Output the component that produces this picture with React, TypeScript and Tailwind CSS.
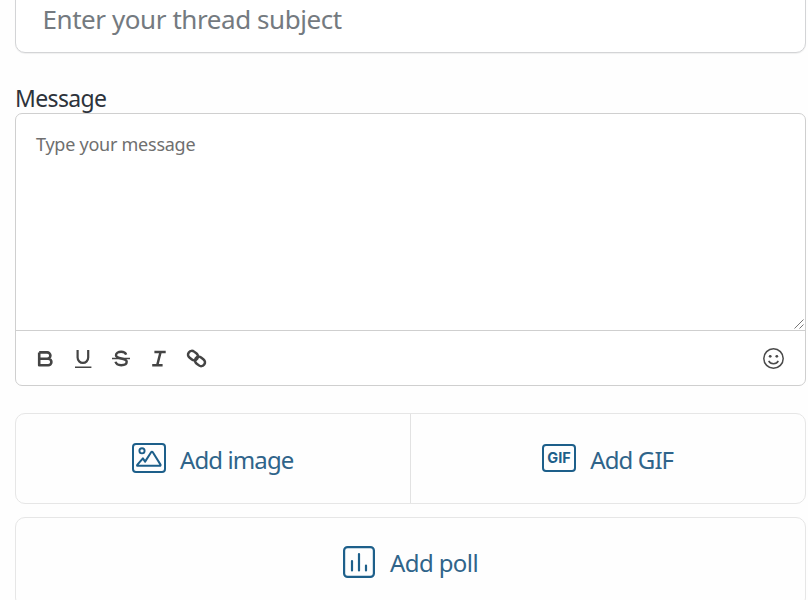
import React from "react";

const tools = [
  {
    label: "Bold",
    icon: (
      <path
        d="M3.2 2.4v12.8h9a3.2 3.2 0 0 0 0-6.4h-9M3.2 2.4h8a3.2 3.2 0 0 1 0 6.4"
        strokeWidth="2.6"
        strokeLinejoin="round"
      />
    ),
  },
  {
    label: "Underline",
    icon: (
      <>
        <path d="M3.6 0v7.6a5.3 5.3 0 0 0 10.6 0V0" strokeWidth="2.2" />
        <path d="M1 17.3h16.4" strokeWidth="1.4" />
      </>
    ),
  },
  {
    label: "Strikethrough",
    icon: (
      <>
        <path
          d="M14.2 4.6C13.4 2.6 11.6 1.8 9.2 1.8c-3 0-5.2 1.4-5.2 3.5 0 4.4 10.7 1.9 10.7 6.5 0 2.2-2.4 3.4-5.5 3.4-3 0-5.1-1.2-5.7-3.4"
          strokeWidth="2.4"
        />
        <path d="M0 8.6h18" strokeWidth="1.5" />
      </>
    ),
  },
  {
    label: "Italic",
    icon: <path d="M4.4 2h11.3M2.2 15.2h10.4M10.6 2L7.2 15.2" strokeWidth="2.5" />,
  },
  {
    label: "Link",
    icon: (
      <g strokeWidth="2.5">
        <rect x="-0.2" y="1.8" width="10.4" height="7.6" rx="3.6" transform="rotate(38 5 5.6)" />
        <rect x="6.8" y="7.6" width="10.4" height="7.6" rx="3.6" transform="rotate(38 12 11.4)" />
      </g>
    ),
  },
];

function ImageIcon() {
  return (
    <svg width="34" height="30" viewBox="0 0 34 30" fill="none" stroke="#1d5f8a" strokeLinecap="round" strokeLinejoin="round">
      <rect x="1" y="1" width="32" height="28" rx="3" strokeWidth="2" />
      <circle cx="10" cy="7.8" r="2.6" strokeWidth="1.9" />
      <path d="M5.6 22.8h22.2a.8.8 0 0 0 .7-1.2L20.8 9.3a1 1 0 0 0-1.7 0l-6 9.3-2.2-3.2-5.7 6.5c-.3.5-.1.9.4.9zM13.1 18.6l1.3-2" strokeWidth="2" />
    </svg>
  );
}

function GifIcon() {
  return (
    <svg width="34" height="28" viewBox="0 0 34 28" fill="none" stroke="#1d5f8a">
      <rect x="1" y="1" width="32" height="26" rx="3" strokeWidth="2" />
      <text
        x="17"
        y="19"
        textAnchor="middle"
        textLength="23.5"
        stroke="none"
        fill="#1d5f8a"
        className="font-['Inter',sans-serif] text-[14.5px] font-bold tracking-normal"
      >
        GIF
      </text>
    </svg>
  );
}

function PollIcon() {
  return (
    <svg width="32" height="32" viewBox="0 0 32 32" fill="none" stroke="#1d5f8a" strokeLinecap="round">
      <rect x="1.1" y="1.1" width="29.8" height="29.8" rx="3.5" strokeWidth="2.2" />
      <path d="M9 15v9.5M16 8v16.5M23 19.5v5" strokeWidth="2.2" />
    </svg>
  );
}

export default function ThreadForm() {
  return (
    <form className="h-[600px] w-[808px] overflow-hidden bg-[#fefefe] pl-[15px] pr-[2px] font-['Noto_Sans',sans-serif]">
      <input
        aria-label="Subject"
        placeholder="Enter your thread subject"
        className="-mt-[14px] block h-[67px] w-full rounded-[10px] border border-[#d3d4d6] bg-white px-[26.5px] pb-[2px] text-[26px] tracking-[-0.43px] shadow-[0_1px_1px_rgba(0,0,0,0.06)] outline-none placeholder:text-[#747a80]"
      />

      <label htmlFor="message" className="mt-[30px] block h-[30px] text-[23px] leading-[30px] tracking-[-0.65px] text-[#2d333b]">
        Message
      </label>
      <div className="h-[273px] overflow-hidden rounded-[7px] border border-[#cfcfcf] bg-white">
        <div className="relative">
          <textarea
            id="message"
            placeholder="Type your message"
            className="block h-[216px] w-full resize-none px-5 py-[18px] text-[18px] leading-6 tracking-[-0.25px] outline-none placeholder:text-[#6f6f6f]"
          />
          <svg width="10" height="10" viewBox="0 0 10 10" stroke="#777" className="pointer-events-none absolute bottom-[1px] right-[1px]">
            <path d="M0.5 9.5l9-9M5.5 9.5l4-4" />
          </svg>
        </div>
        <div className="flex h-[55px] items-center justify-between border-t border-[#cfcfcf] px-5 pt-[2px]">
          <div className="flex gap-5">
            {tools.map((tool) => (
              <button key={tool.label} type="button" aria-label={tool.label}>
                <svg width="18" height="18" viewBox="0 0 18 18" fill="none" stroke="#444" className="overflow-visible">
                  {tool.icon}
                </svg>
              </button>
            ))}
          </div>
          <button type="button" aria-label="Emoji">
            <svg width="22" height="22" viewBox="0 0 22 22" fill="none" stroke="#4a4a4a">
              <circle cx="10.5" cy="10.5" r="9.7" strokeWidth="1.5" />
              <path d="M5.7 12.9c1.8 3.8 7.8 3.8 9.6 0" strokeWidth="1.5" />
              <circle cx="7.2" cy="8.3" r="1.4" fill="#4a4a4a" stroke="none" />
              <circle cx="13.8" cy="8.3" r="1.4" fill="#4a4a4a" stroke="none" />
            </svg>
          </button>
        </div>
      </div>

      <div className="mt-[27px] grid h-[91px] grid-cols-2 rounded-[10px] border border-[#e6e6e6] text-[24px] tracking-[-0.9px] text-[#2f648a]">
        <button type="button" className="flex items-center justify-center gap-[14px] border-r border-[#e2e2e2]">
          <span className="-mt-[1px]">
            <ImageIcon />
          </span>
          <span className="pt-[2px]">Add image</span>
        </button>
        <button type="button" className="flex items-center justify-center gap-[14px]">
          <span className="-mt-[1px]">
            <GifIcon />
          </span>
          <span className="pt-[2px]">Add GIF</span>
        </button>
      </div>
      <button
        type="button"
        className="mt-[13px] flex h-[91px] w-full items-center justify-center gap-[15px] rounded-[10px] border border-[#e6e6e6] text-[24px] tracking-[-0.6px] text-[#2f648a]"
      >
        <span className="-mt-[2px]">
          <PollIcon />
        </span>
        <span className="pt-[1px]">Add poll</span>
      </button>
    </form>
  );
}
